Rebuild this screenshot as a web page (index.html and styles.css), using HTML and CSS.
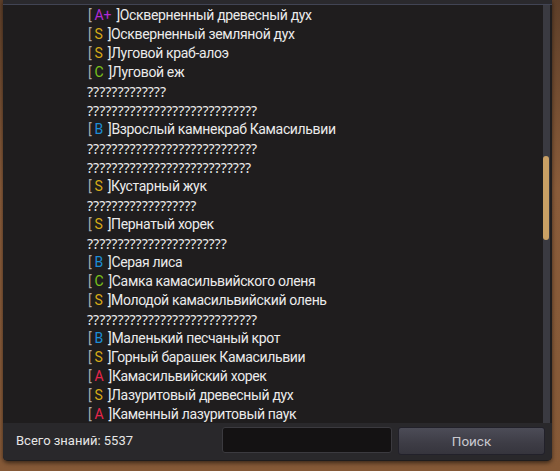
FILE: index.html
```html
<!DOCTYPE html>
<html lang="ru">
<head>
  <meta charset="UTF-8" />
  <meta name="viewport" content="width=device-width, initial-scale=1" />
  <title>Знания</title>
  <link rel="stylesheet" href="styles.css">
</head>
<body>
  <div class="panel">
    <div class="list">
      <ul class="entries">
        <li><span class="br">[</span><span class="g g-ap">A+</span>]Оскверненный древесный дух</li>
        <li><span class="br">[</span><span class="g g-s">S</span>]Оскверненный земляной дух</li>
        <li><span class="br">[</span><span class="g g-s">S</span>]Луговой краб-алоэ</li>
        <li><span class="br">[</span><span class="g g-c">C</span>]Луговой еж</li>
        <li class="unknown">?????????????</li>
        <li class="unknown">????????????????????????????</li>
        <li><span class="br">[</span><span class="g g-b">B</span>]Взрослый камнекраб Камасильвии</li>
        <li class="unknown">????????????????????????????</li>
        <li class="unknown">???????????????????????????</li>
        <li><span class="br">[</span><span class="g g-s">S</span>]Кустарный жук</li>
        <li class="unknown">??????????????????</li>
        <li><span class="br">[</span><span class="g g-s">S</span>]Пернатый хорек</li>
        <li class="unknown">???????????????????????</li>
        <li><span class="br">[</span><span class="g g-b">B</span>]Серая лиса</li>
        <li><span class="br">[</span><span class="g g-c">C</span>]Самка камасильвийского оленя</li>
        <li><span class="br">[</span><span class="g g-s">S</span>]Молодой камасильвийский олень</li>
        <li class="unknown">????????????????????????????</li>
        <li><span class="br">[</span><span class="g g-b">B</span>]Маленький песчаный крот</li>
        <li><span class="br">[</span><span class="g g-s">S</span>]Горный барашек Камасильвии</li>
        <li><span class="br">[</span><span class="g g-a">A</span>]Камасильвийский хорек</li>
        <li><span class="br">[</span><span class="g g-s">S</span>]Лазуритовый древесный дух</li>
        <li><span class="br">[</span><span class="g g-a">A</span>]Каменный лазуритовый паук</li>
      </ul>
      <div class="scroll-track">
        <div class="scroll-thumb"></div>
      </div>
    </div>
    <div class="footer">
      <span class="total">Всего знаний: 5537</span>
      <input class="search-input" type="text" />
      <button class="btn-search">Поиск</button>
    </div>
  </div>
</body>
</html>
```

FILE: styles.css
```css
:root {
  --panel: #1f1d1e;
  --footer: #29282b;
  --text: #ebebeb;
  --muted: #a9a9a9;
}

* {
  margin: 0;
  padding: 0;
  box-sizing: border-box;
}

body {
  width: 560px;
  height: 471px;
  background: linear-gradient(180deg, #5e3f29 0%, #8a5c3a 40%, #855937 100%);
  font-family: Roboto, 'Noto Sans', sans-serif;
  color: var(--text);
  overflow: hidden;
}

/* Panel */
.panel {
  margin-left: 3px;
  width: 549px;
  height: 461px;
  background: var(--panel);
  border-top: 4px solid #2a292d;
  border-radius: 0 0 5px 5px;
  box-shadow: 0 2px 4px rgba(0, 0, 0, 0.55);
  overflow: hidden;
}

.list {
  display: flex;
  height: 419px;
  border-top: 1px solid #414454;
}

.entries {
  flex: 1;
  list-style: none;
  padding: 1px 0 0 84px;
  font-size: 14px;
  line-height: 19px;
  letter-spacing: -0.35px;
  white-space: nowrap;
  overflow: hidden;
}

.unknown {
  font-family: 'Noto Sans', sans-serif;
  letter-spacing: 0;
}

.br {
  color: var(--muted);
  padding-left: 1px;
}

.g {
  display: inline-block;
  padding: 0 5px 0 3px;
  letter-spacing: 0;
}

.g-ap { color: #b22ad6; }
.g-s { color: #d6a917; }
.g-c { color: #7cc21c; }
.g-b { color: #1d8fd6; }
.g-a { color: #e8254c; }

/* Scrollbar */
.scroll-track {
  width: 7px;
  margin-right: 2px;
  background: #3a3a41;
  padding-top: 151px;
}

.scroll-thumb {
  width: 6px;
  height: 84px;
  background: #c9a065;
  border-radius: 3px;
}

/* Footer */
.footer {
  display: flex;
  align-items: center;
  height: 37px;
  padding: 0 6px 3px 10px;
  background: var(--footer);
}

.total {
  width: 209px;
  padding-left: 3px;
  font-size: 13px;
  color: #e6e6e6;
}

.search-input {
  width: 170px;
  height: 26px;
  background: #141213;
  border: 1px solid #3b3a3f;
  border-radius: 3px;
  outline: none;
}

.btn-search {
  width: 147px;
  height: 28px;
  margin-left: 6px;
  margin-top: 2px;
  background: linear-gradient(180deg, #4c4c57 0%, #3d3c45 60%, #36353d 100%);
  border: 1px solid #22212a;
  border-radius: 3px;
  font-family: Roboto, 'Noto Sans', sans-serif;
  font-size: 13.5px;
  color: #c9c9cf;
}
```
